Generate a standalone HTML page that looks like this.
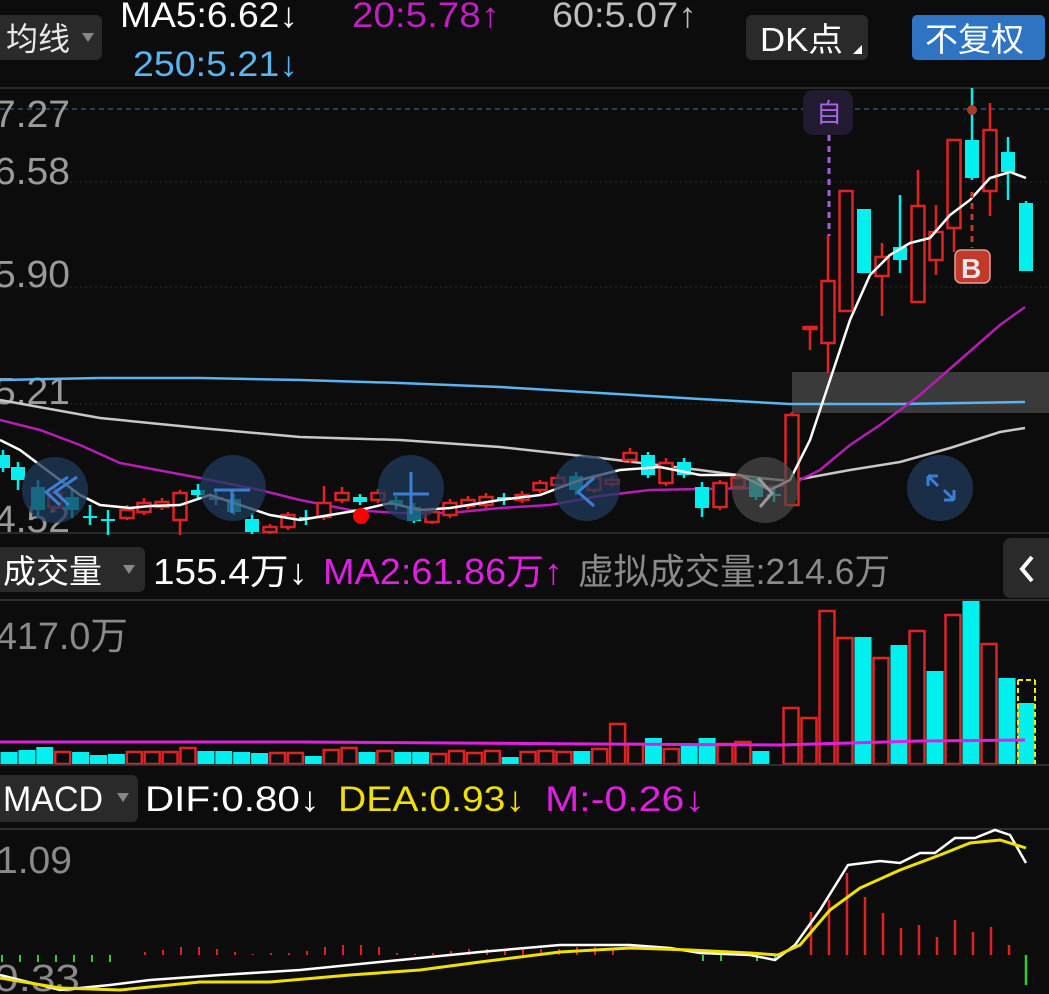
<!DOCTYPE html>
<html><head><meta charset="utf-8"><style>
html,body{margin:0;padding:0;background:#0c0c0c;width:1049px;height:994px;overflow:hidden}
svg{display:block}
text{font-family:"Liberation Sans","Noto Sans CJK SC",sans-serif}
</style></head><body>
<svg id="s" width="1049" height="994" viewBox="0 0 1049 994" xmlns="http://www.w3.org/2000/svg">
<rect width="1049" height="994" fill="#0c0c0c"/>
<!-- header -->
<rect x="-6" y="15" width="108" height="45" rx="6" fill="#2a2a2a"/>
<text x="6" y="50" font-size="32" fill="#e8e8e8">均线</text>
<path d="M82 33 L94 33 L88 42 Z" fill="#888"/>
<text x="120" y="27" font-size="35" fill="#fff" textLength="178" lengthAdjust="spacingAndGlyphs">MA5:6.62↓</text>
<text x="352" y="27" font-size="35" fill="#c21fc2" textLength="148" lengthAdjust="spacingAndGlyphs">20:5.78↑</text>
<text x="552" y="27" font-size="35" fill="#bdbdbd" textLength="145" lengthAdjust="spacingAndGlyphs">60:5.07↑</text>
<text x="133" y="76" font-size="35" fill="#5ab4f0" textLength="165" lengthAdjust="spacingAndGlyphs">250:5.21↓</text>
<rect x="746" y="15" width="122" height="45" rx="6" fill="#2a2a2a"/>
<text x="760" y="51" font-size="33" fill="#fff" textLength="83" lengthAdjust="spacingAndGlyphs">DK点</text>
<path d="M853 54 L862 54 L862 45 Z" fill="#fff"/>
<rect x="912" y="15" width="133" height="45" rx="5" fill="#2f74c2"/>
<text x="925" y="51" font-size="33" fill="#fff">不复权</text>
<!-- main chart frame -->
<line x1="0" y1="88" x2="1049" y2="88" stroke="#2a2a2a" stroke-width="2"/>
<line x1="0" y1="109" x2="1049" y2="109" stroke="#3d5f86" stroke-width="1.2" stroke-dasharray="5,4"/>
<line x1="0" y1="182" x2="1049" y2="182" stroke="#2c2c2c" stroke-width="1" stroke-dasharray="2,3"/>
<line x1="0" y1="287" x2="1049" y2="287" stroke="#2c2c2c" stroke-width="1" stroke-dasharray="2,3"/>
<line x1="0" y1="404" x2="1049" y2="404" stroke="#2c2c2c" stroke-width="1" stroke-dasharray="2,3"/>
<line x1="0" y1="533" x2="1049" y2="533" stroke="#2a2a2a" stroke-width="2"/>
<g font-size="38" fill="#9a9a9a">
<text x="-6" y="127" textLength="76" lengthAdjust="spacingAndGlyphs">7.27</text>
<text x="-6" y="184" textLength="76" lengthAdjust="spacingAndGlyphs">6.58</text>
<text x="-6" y="287" textLength="76" lengthAdjust="spacingAndGlyphs">5.90</text>
<text x="-6" y="404" textLength="76" lengthAdjust="spacingAndGlyphs">5.21</text>
<text x="-6" y="532" textLength="76" lengthAdjust="spacingAndGlyphs">4.52</text>
</g>
<rect x="792" y="372" width="257" height="41" fill="#3a3a3a"/>
<!-- MA lines -->
<polyline fill="none" stroke="#5ab4f0" stroke-width="2.5" points="0,380 100,378 200,378 300,380 400,383 500,387 600,393 700,399 790,404 900,404 1025,402"/>
<polyline fill="none" stroke="#c8c8c8" stroke-width="2.5" points="0,400 100,418 200,428 300,437 400,440 500,447 600,458 700,470 760,478 790,481 850,470 900,462 950,448 1000,432 1025,428"/>
<polyline fill="none" stroke="#b51db5" stroke-width="2.5" points="0,420 40,430 80,445 120,463 200,478 260,490 300,500 350,510 400,513 450,513 500,508 550,505 600,496 650,490 700,489 760,488 790,485 820,470 850,445 880,425 920,395 960,360 1000,325 1025,307"/>
<g id="candles"></g>
<polyline fill="none" stroke="#fff" stroke-width="2.5" points="0,440 20,450 40,465 60,480 80,495 100,505 130,508 150,506 180,505 210,495 240,505 270,515 300,520 330,515 360,510 390,503 420,510 450,508 500,500 540,495 580,480 620,470 660,467 700,475 740,475 770,490 790,480 810,440 830,380 850,320 870,275 890,255 910,243 930,238 950,215 970,200 990,178 1010,172 1026,178"/>
<!-- overlay circles -->
<g fill="#1f3a5c" fill-opacity="0.75">
<circle cx="55" cy="490" r="33"/><circle cx="233" cy="488" r="33"/><circle cx="411" cy="488" r="33"/><circle cx="587" cy="488" r="33"/><circle cx="940" cy="488" r="33"/>
</g>
<circle cx="765" cy="490" r="33" fill="#4a4a4a" fill-opacity="0.7"/>
<g stroke="#3b7fd4" stroke-width="3" fill="none">
<path d="M68 477 L46 492 L60 505 M77 477 L55 492 L69 505"/>
<path d="M214 490 L250 490 M232 490 L232 513"/>
<path d="M393 494 L429 494 M411 472 L411 514"/>
<path d="M594 478 L578 492 L594 506"/>
<path d="M928 476 L928 486 M928 476 L938 476 M928 476 L938 486 M954 500 L944 500 M954 500 L954 490 M954 500 L944 490"/>
</g>
<path d="M758 478 L772 493 L760 507" stroke="#999" stroke-width="3" fill="none"/>
<circle cx="361" cy="516" r="8" fill="#f00"/>
<!-- badges -->
<line x1="829" y1="135" x2="829" y2="236" stroke="#a060e0" stroke-width="3" stroke-dasharray="6,5"/>
<rect x="803" y="90" width="50" height="45" rx="10" fill="#221a30"/>
<text x="816" y="122" font-size="26" fill="#a366e0">自</text>
<line x1="972" y1="192" x2="972" y2="248" stroke="#c0392b" stroke-width="3" stroke-dasharray="6,5"/>
<circle cx="972" cy="110" r="5" fill="#a83a2a"/>
<rect x="955" y="250" width="35" height="33" rx="6" fill="#c0392b" stroke="#e5a090" stroke-width="1.5"/>
<text x="961" y="278" font-size="28" fill="#e8e8e8" font-weight="bold">B</text>
<!-- volume header -->
<rect x="-6" y="547" width="151" height="45" rx="6" fill="#2a2a2a"/>
<text x="3" y="583" font-size="33" fill="#fff">成交量</text>
<path d="M123 565 L135 565 L129 574 Z" fill="#888"/>
<text x="153" y="584" font-size="36" fill="#fff" textLength="155" lengthAdjust="spacingAndGlyphs">155.4万↓</text>
<text x="323" y="584" font-size="36" fill="#e020e0" textLength="240" lengthAdjust="spacingAndGlyphs">MA2:61.86万↑</text>
<text x="578" y="584" font-size="36" fill="#8a8a8a" textLength="312" lengthAdjust="spacingAndGlyphs">虚拟成交量:214.6万</text>
<rect x="1003" y="538" width="52" height="60" rx="8" fill="#2a2a2a"/>
<path d="M1032 557 L1022 569 L1032 581" stroke="#fff" stroke-width="4" fill="none"/>
<line x1="0" y1="600" x2="1049" y2="600" stroke="#3a3a3a" stroke-width="1.5"/>
<text x="-4" y="649" font-size="38" fill="#8a8a8a" textLength="132" lengthAdjust="spacingAndGlyphs">417.0万</text>
<g id="vol"></g>
<line x1="1018" y1="680" x2="1018" y2="764" stroke="#ee0" stroke-width="2" stroke-dasharray="5,3"/>
<line x1="1035" y1="680" x2="1035" y2="764" stroke="#ee0" stroke-width="2" stroke-dasharray="5,3"/>
<line x1="1018" y1="680" x2="1035" y2="680" stroke="#ee0" stroke-width="2" stroke-dasharray="5,3"/>
<line x1="0" y1="765" x2="1049" y2="765" stroke="#3a3a3a" stroke-width="1.5"/>
<polyline fill="none" stroke="#e020e0" stroke-width="3" points="0,742 300,742 600,744 780,745 850,743 920,741 1025,740"/>
<!-- MACD header -->
<rect x="-6" y="775" width="144" height="47" rx="6" fill="#2a2a2a"/>
<text x="3" y="811" font-size="35" fill="#fff" textLength="100" lengthAdjust="spacingAndGlyphs">MACD</text>
<path d="M117 793 L129 793 L123 802 Z" fill="#888"/>
<text x="145" y="811" font-size="35" fill="#fff" textLength="175" lengthAdjust="spacingAndGlyphs">DIF:0.80↓</text>
<text x="338" y="811" font-size="35" fill="#f0e000" textLength="187" lengthAdjust="spacingAndGlyphs">DEA:0.93↓</text>
<text x="545" y="811" font-size="35" fill="#e020e0" textLength="160" lengthAdjust="spacingAndGlyphs">M:-0.26↓</text>
<line x1="0" y1="829" x2="1049" y2="829" stroke="#3a3a3a" stroke-width="1.5"/>
<text x="-4" y="873" font-size="38" fill="#8a8a8a" textLength="76" lengthAdjust="spacingAndGlyphs">1.09</text>
<g id="macd"></g>
<text x="-6" y="991" font-size="38" fill="#8a8a8a" textLength="86" lengthAdjust="spacingAndGlyphs">0.33</text>
<polyline fill="none" stroke="#fff" stroke-width="2.5" points="0,975 60,990 110,985 150,980 220,975 300,970 400,960 480,952 560,945 630,945 670,948 700,953 750,955 775,960 795,945 820,910 848,865 880,861 900,863 920,853 935,853 955,838 975,838 995,830 1010,835 1026,863"/>
<polyline fill="none" stroke="#f0e000" stroke-width="3" points="0,978 60,988 120,990 200,982 270,982 350,975 420,970 480,962 560,952 630,948 690,950 750,953 778,955 800,945 830,910 860,888 900,870 940,855 970,843 1000,840 1026,848"/>
</svg>
<script>
var NS="http://www.w3.org/2000/svg";
function el(p,t,a){var e=document.createElementNS(NS,t);for(var k in a)e.setAttribute(k,a[k]);p.appendChild(e);return e;}
var C=[[3,455,468,450,472,'c'],[18,467,480,462,490,'c'],[38,487,510,480,518,'c'],[55,493,507,488,512,'r'],[72,497,510,490,518,'c'],[90,516,518,505,525,'c'],[108,519,521,510,535,'c'],[127,510,518,505,520,'r'],[144,503,512,498,515,'r'],[162,502,507,498,510,'r'],[180,493,520,490,535,'r'],[198,490,495,484,500,'c'],[216,497,500,490,505,'c'],[234,499,512,494,515,'c'],[252,519,532,513,534,'c'],[270,527,532,524,534,'r'],[288,515,527,512,530,'r'],[306,517,519,510,525,'c'],[324,503,517,486,520,'r'],[342,493,500,487,503,'r'],[360,497,502,494,505,'c'],[378,493,500,489,503,'r'],[396,500,505,496,510,'c'],[414,507,521,503,523,'c'],[432,512,522,509,524,'r'],[450,503,515,499,518,'r'],[468,500,506,496,509,'r'],[486,497,505,493,508,'r'],[504,497,500,493,505,'c'],[522,495,500,491,503,'r'],[540,483,490,480,493,'r'],[558,478,485,474,488,'r'],[576,476,490,472,495,'c'],[594,478,490,474,493,'r'],[612,480,484,477,487,'r'],[630,453,460,448,463,'r'],[648,455,475,452,478,'c'],[666,463,483,458,486,'r'],[684,462,475,458,478,'c'],[702,487,508,482,517,'c'],[720,483,507,480,510,'r'],[738,478,487,475,490,'r'],[756,479,497,476,500,'c'],[774,494,496,488,502,'c'],[792,415,505,412,507,'r'],[810,327,329,327,350,'r'],[828,281,343,236,373,'r'],[846,191,311,191,311,'r'],[864,209,273,209,273,'c'],[882,257,276,243,316,'r'],[900,247,260,195,273,'c'],[918,206,302,170,302,'r'],[936,232,260,205,275,'r'],[954,140,228,140,252,'r'],[972,140,178,88,180,'c'],[990,130,191,103,216,'r'],[1008,152,172,137,200,'c'],[1026,203,271,201,271,'c']];
var g=document.getElementById('candles');
C.forEach(function(c){var col=c[5]=='r'?'#e02222':'#00f0f0';
el(g,'line',{x1:c[0],x2:c[0],y1:c[3],y2:c[4],stroke:col,'stroke-width':2.5});
var h=Math.max(c[2]-c[1],2);
if(c[5]=='r')el(g,'rect',{x:c[0]-6.5,y:c[1],width:13,height:h,fill:'#0c0c0c',stroke:col,'stroke-width':2.5});
else el(g,'rect',{x:c[0]-7,y:c[1],width:14,height:h,fill:col});});
var v=document.getElementById('vol');
var sh=[12,14,17,12,12,9,10,12,12,12,16,13,13,12,11,11,11,8,14,16,12,13,12,12,10,13,11,13,7,12,13,12,13,15,40,20,26,15,20,26,20,22,13];
for(var i=0;i<43;i++){var c=C[i];var x=i*17.9,h=sh[i];var col=c[5]=='r'?'#e02222':'#00f0f0';
if(c[5]=='r')el(v,'rect',{x:x+1.5,y:764-h,width:15,height:h,fill:'none',stroke:col,'stroke-width':2.5});else el(v,'rect',{x:x+0.5,y:764-h,width:17,height:h,fill:col});}
var B=[[782,708,'r'],[800,718,'r'],[818,611,'r'],[836,638,'r'],[854,637,'c'],[872,658,'r'],[890,645,'c'],[908,631,'r'],[926,671,'c'],[944,615,'r'],[962,601,'c'],[980,644,'r'],[998,678,'c'],[1017,703,'c']];
B.forEach(function(b){if(b[2]=='r')el(v,'rect',{x:b[0]+1.5,y:b[1],width:15,height:764-b[1],fill:'none',stroke:'#e02222','stroke-width':2.5});else el(v,'rect',{x:b[0]+0.5,y:b[1],width:17,height:764-b[1],fill:'#00f0f0'});});
var m=document.getElementById('macd');
for(var x=2;x<112;x+=18)el(m,'line',{x1:x,x2:x,y1:955,y2:962,stroke:'#3c3','stroke-width':2});
var hs=[3,5,8,8,6,3,1,2,2,4,8,10,10,8,2,1,2,4,6,6,6,6,6,6,8,8,6];
for(var i=0;i<hs.length;i++){var x=145+i*18;el(m,'line',{x1:x,x2:x,y1:955-hs[i],y2:955,stroke:'#d22','stroke-width':2});}
[[811,912],[829,900],[847,873],[865,897],[883,913],[901,928],[919,925],[937,937],[955,920],[973,932],[991,927],[1009,945]].forEach(function(b){el(m,'line',{x1:b[0],x2:b[0],y1:b[1],y2:955,stroke:'#d22','stroke-width':2.5});});
el(m,'line',{x1:1026,x2:1026,y1:955,y2:985,stroke:'#3c3','stroke-width':2.5});
[703,721,757,775].forEach(function(x){el(m,'line',{x1:x,x2:x,y1:955,y2:961,stroke:'#3c3','stroke-width':2});});
</script>
</body></html>
